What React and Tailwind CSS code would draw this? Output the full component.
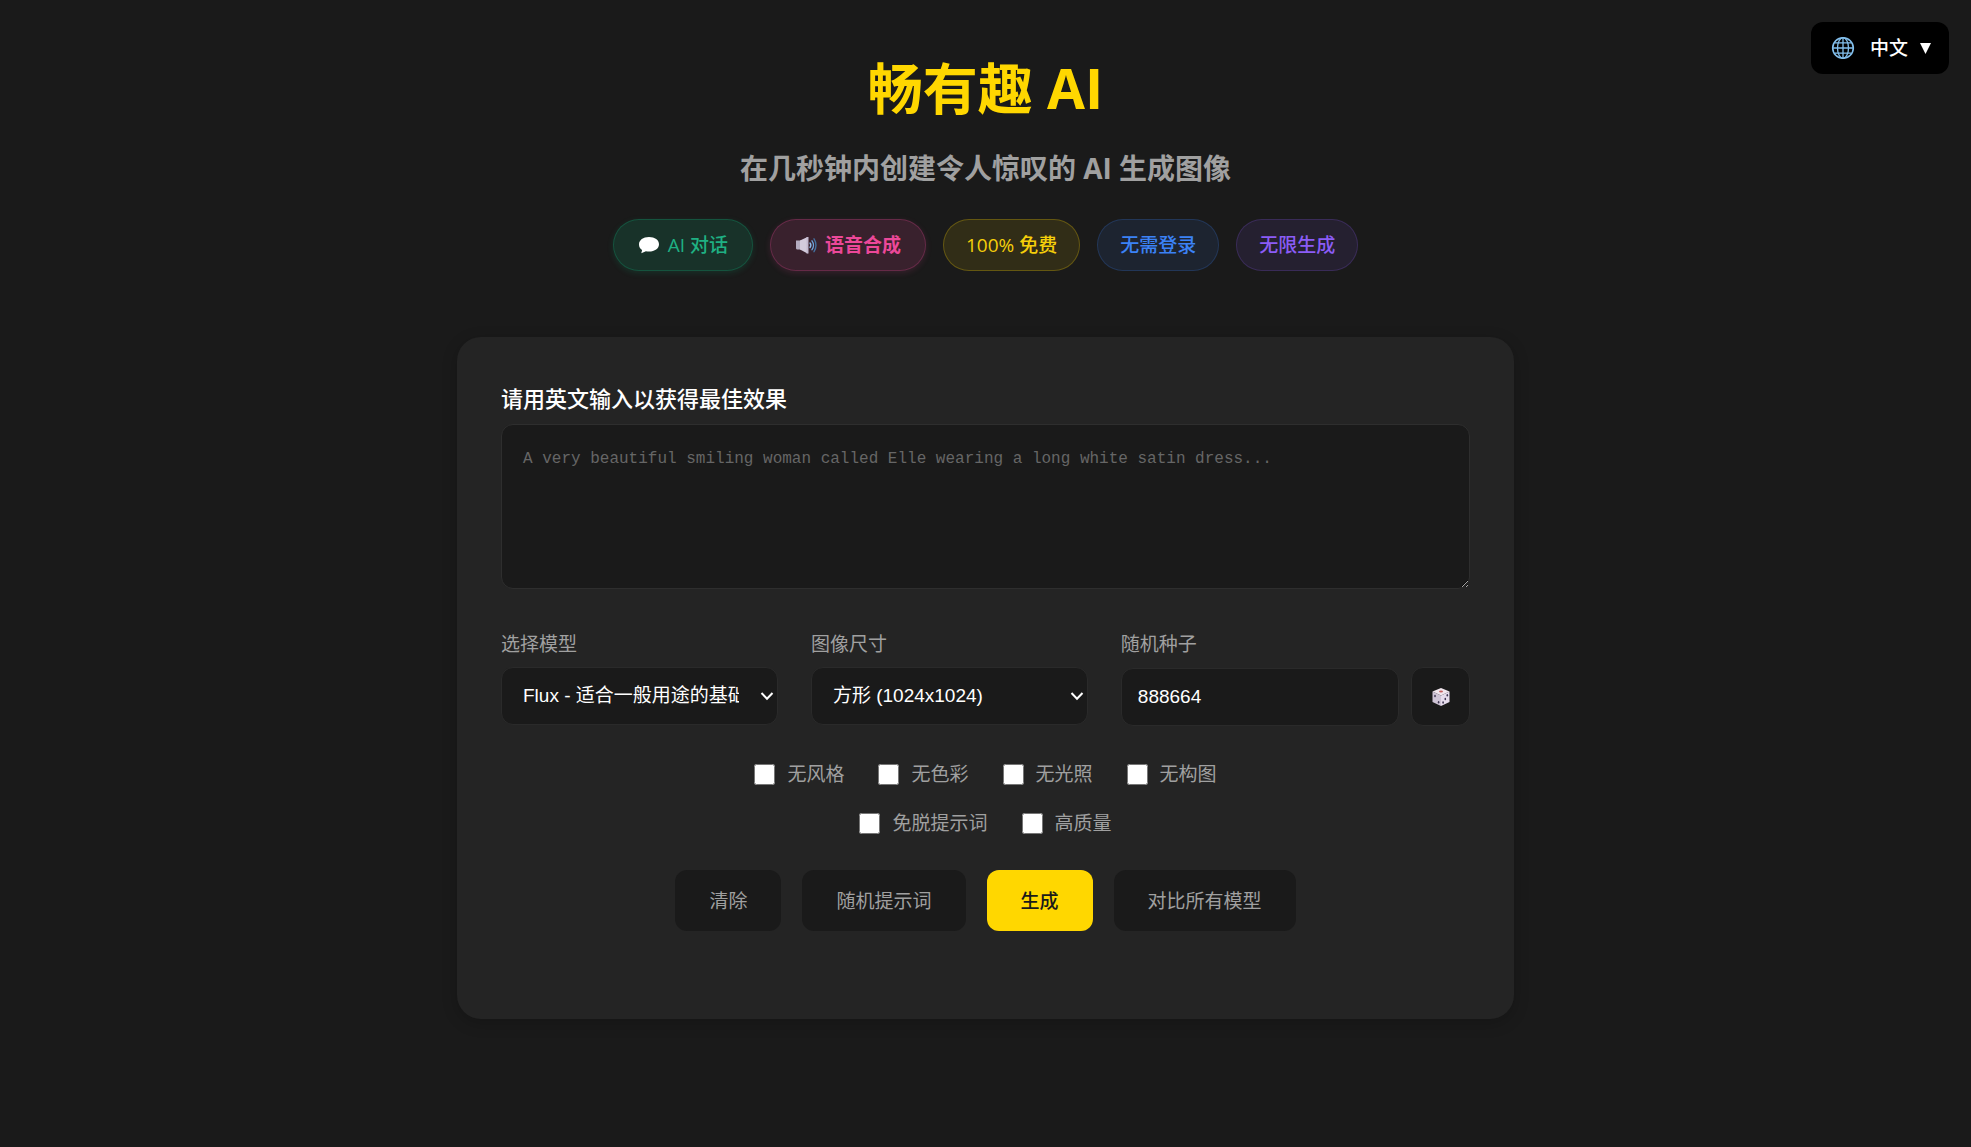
import { useState } from "react";

const TAGS = [
  {
    label: "AI 对话",
    Icon: ChatIcon,
    className:
      "px-6 border-[#10b981]/25 bg-[#10b981]/15 font-medium text-[#1fb083] shadow-[0_2px_6px_rgba(16,185,129,0.15)]",
  },
  {
    label: "语音合成",
    Icon: SpeakerIcon,
    className:
      "px-6 border-[#ec4899]/25 bg-[#ec4899]/15 font-semibold text-[#ec4899] shadow-[0_2px_6px_rgba(236,72,153,0.15)]",
  },
  { label: "100% 免费", className: "px-[22px] border-[#ffd700]/25 bg-[#ffd700]/10 font-medium text-[#f5cf0a]" },
  { label: "无需登录", className: "px-[22px] border-[#3b82f6]/20 bg-[#3b82f6]/10 font-medium text-[#3b82f6]" },
  { label: "无限生成", className: "px-[22px] border-[#8b5cf6]/20 bg-[#8b5cf6]/10 font-medium text-[#8b5cf6]" },
];

const OPTIONS = ["无风格", "无色彩", "无光照", "无构图", "免脱提示词", "高质量"];

const fieldClass =
  "h-[58px] w-full rounded-xl border border-[#2a2a2a] bg-[#1a1a1a] font-['Liberation_Sans','Noto_Sans_CJK_SC',sans-serif] text-[19px] text-white focus:outline-none focus:border-[#ffd700]";

function ChatIcon() {
  return (
    <svg viewBox="0 0 22 20" className="h-5 w-[22px]" aria-hidden="true">
      <path
        d="M11 2C5.2 2 1 5.1 1 9.4c0 2.3 1.2 4.2 3.1 5.5L3.3 18.300l4.600-2c1 .2 2 .3 3.100.3 5.800 0 10-3 10-7.300S16.800 2 11 2Z"
        fill="#fff"
      />
    </svg>
  );
}

function SpeakerIcon() {
  return (
    <svg viewBox="0 0 22 20" className="h-5 w-[22px]" aria-hidden="true">
      <path d="M1 5.500h6v9H1.800L1 13.500Z" fill="#b3abbf" />
      <path d="M5 5.500 12.500 2v16.500L5 14.500Z" fill="#d3cbdc" />
      <path d="M11.500 2h2v16.500h-2Z" fill="#c4bad0" />
      <g fill="none" strokeLinecap="round" strokeWidth="1.400">
        <path d="M15 8c1 1.300 1 3.200 0 4.500" stroke="#8fb9e8" />
        <path d="M17 5.800c1.900 2.500 1.900 6.400 0 8.900" stroke="#6fa3dc" />
        <path d="M19 3.800c2.600 3.700 2.600 9.200 0 12.900" stroke="#44709f" />
      </g>
    </svg>
  );
}

function GlobeIcon() {
  return (
    <svg viewBox="0 0 24 24" className="size-6" fill="none" stroke="#83bfec" strokeWidth="1.300" aria-hidden="true">
      <circle cx="12" cy="12" r="10.300" strokeWidth="1.600" />
      <ellipse cx="12" cy="12" rx="5.500" ry="10.300" />
      <path d="M12 1.700v20.600M1.700 12h20.600M3.500 6.800h17M3.500 17.200h17" />
    </svg>
  );
}

function DiceIcon() {
  return (
    <svg viewBox="0 0 20 20" className="size-5" aria-hidden="true">
      <path d="M10 1 18.500 4.500 10 8.500 1.500 4.500Z" fill="#f1e6ee" />
      <path d="M1.500 4.500 10 8.500V19l-8.500-4Z" fill="#cfc4d6" />
      <path d="M18.500 4.500 10 8.500V19l8.500-4Z" fill="#e6dcec" />
      <ellipse cx="10" cy="4.400" rx="2" ry="1" fill="#c4605f" />
      <g fill="#3d3450">
        <ellipse cx="4" cy="9" rx=".8" ry="1.200" />
        <ellipse cx="7.600" cy="15.200" rx=".8" ry="1.200" />
        <ellipse cx="16.300" cy="8.300" rx=".8" ry="1.200" />
        <ellipse cx="14.300" cy="12" rx=".8" ry="1.200" />
        <ellipse cx="12.100" cy="15.500" rx=".8" ry="1.200" />
      </g>
    </svg>
  );
}

function SelectField({ id, label, children }) {
  return (
    <div>
      <label htmlFor={id} className="block">
        {label}
      </label>
      <div className="relative mt-[9px]">
        <select id={id} className={`appearance-none pr-[38px] pl-[21px] ${fieldClass}`}>
          {children}
        </select>
        <svg
          viewBox="0 0 14 14"
          className="pointer-events-none absolute inset-y-0 right-1 my-auto size-[14px]"
          fill="none"
          stroke="#fff"
          strokeWidth="2"
          aria-hidden="true"
        >
          <path d="M1.500 4 7 9.800 12.500 4" />
        </svg>
      </div>
    </div>
  );
}

function ActionButton({ primary, children, onClick }) {
  return (
    <button
      type="button"
      onClick={onClick}
      className={
        primary
          ? "h-[61px] rounded-xl bg-[#ffd700] px-[34px] font-medium text-[#1a1a1a] hover:bg-[#ffe033]"
          : "h-[61px] rounded-xl bg-[#1a1a1a] px-[34px] text-[#a0a0a0] hover:text-white"
      }
    >
      {children}
    </button>
  );
}

export default function App() {
  const [prompt, setPrompt] = useState("");
  const [seed, setSeed] = useState("888664");

  const randomSeed = () => setSeed(String(Math.floor(Math.random() * 1000000)));

  return (
    <div
      lang="zh-CN"
      className="relative min-h-screen bg-[#1a1a1a] px-6 pt-14 pb-16 font-['Open_Sans','Noto_Sans_CJK_SC',sans-serif] text-[19px] leading-7 text-[#a0a0a0]"
    >
      <button
        type="button"
        className="absolute top-[22px] right-[22px] flex h-[52px] items-center rounded-xl bg-black pr-[18px] pl-5 text-white"
      >
        <GlobeIcon />
        <span className="ml-[15px] font-medium">中文</span>
        <svg viewBox="0 0 10 10" className="ml-3 size-[11px]" aria-hidden="true">
          <path d="M0 0h10L5 10Z" fill="#fff" />
        </svg>
      </button>

      <header className="flex flex-col items-center text-center">
        <h1 className="text-[55px] leading-16 font-bold text-[#ffd700]">畅有趣 AI</h1>
        <h2 className="mt-[30px] text-[28px] leading-9 font-bold">在几秒钟内创建令人惊叹的 AI 生成图像</h2>
        <div className="mt-[33px] flex flex-wrap justify-center gap-[17px]">
          {TAGS.map(({ label, Icon, className }) => (
            <span key={label} className={`flex h-[52px] items-center gap-2 rounded-full border ${className}`}>
              {Icon && <Icon />}
              {label}
            </span>
          ))}
        </div>
      </header>

      <main className="mx-auto mt-[66px] max-w-[1057px] rounded-3xl bg-[#242424] px-11 pt-11 pb-[88px] shadow-[0_4px_16px_rgba(0,0,0,0.2)]">
        <label htmlFor="prompt" className="block text-[22px] leading-[34px] font-medium text-white">
          请用英文输入以获得最佳效果
        </label>
        <textarea
          id="prompt"
          value={prompt}
          onChange={(e) => setPrompt(e.target.value)}
          placeholder="A very beautiful smiling woman called Elle wearing a long white satin dress..."
          className="mt-[9px] block h-[165px] w-full resize-y rounded-xl border border-[#2e2e2e] bg-[#1a1a1a] px-[21px] py-5 font-['Liberation_Mono',monospace] text-base leading-7 text-white placeholder:text-[#666] focus:border-[#ffd700] focus:outline-none"
        />

        <div className="mt-[41px] grid grid-cols-[276fr_276fr_348fr] gap-[33px]">
          <SelectField id="model" label="选择模型">
            <option>Flux - 适合一般用途的基础模型</option>
          </SelectField>
          <SelectField id="size" label="图像尺寸">
            <option>方形 (1024x1024)</option>
          </SelectField>
          <div>
            <label htmlFor="seed" className="block">
              随机种子
            </label>
            <div className="mt-[9px] flex items-center gap-3">
              <input
                id="seed"
                type="text"
                inputMode="numeric"
                value={seed}
                onChange={(e) => setSeed(e.target.value)}
                className={`min-w-0 flex-1 px-4 ${fieldClass}`}
              />
              <button
                type="button"
                onClick={randomSeed}
                aria-label="随机种子"
                className="flex size-[59px] shrink-0 items-center justify-center rounded-xl border border-[#2a2a2a] bg-[#1a1a1a]"
              >
                <DiceIcon />
              </button>
            </div>
          </div>
        </div>

        <div className="mx-auto mt-[34px] flex max-w-[600px] flex-wrap justify-center gap-x-[34px] gap-y-[21px]">
          {OPTIONS.map((option) => (
            <label key={option} className="flex items-center gap-3">
              <input type="checkbox" className="size-[21px]" />
              {option}
            </label>
          ))}
        </div>

        <div className="mt-[33px] flex flex-wrap justify-center gap-[21px]">
          <ActionButton onClick={() => setPrompt("")}>清除</ActionButton>
          <ActionButton>随机提示词</ActionButton>
          <ActionButton primary>生成</ActionButton>
          <ActionButton>对比所有模型</ActionButton>
        </div>
      </main>
    </div>
  );
}
